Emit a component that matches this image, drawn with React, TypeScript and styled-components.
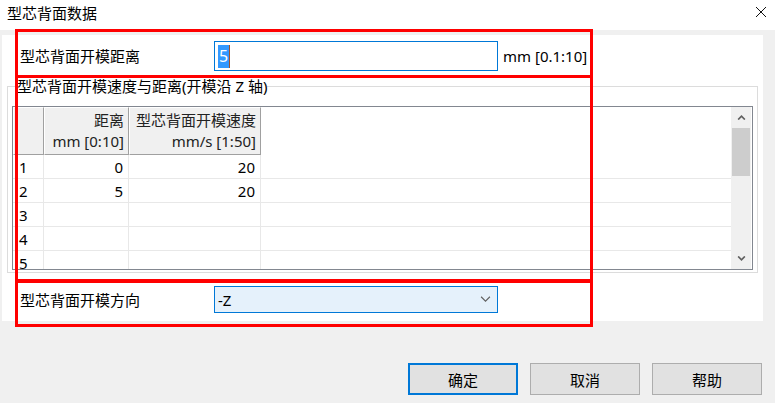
import { FC } from "react";
import styled, { createGlobalStyle } from "styled-components";

const GlobalStyle = createGlobalStyle`
  html, body {
    margin: 0;
    padding: 0;
    background: #f0f0f0;
  }
  body {
    font-family: "Noto Sans", "Noto Sans CJK SC", sans-serif;
    font-size: 15px;
    color: #000;
  }
`;

const rows = [
  { n: 1, dist: "0", speed: "20" },
  { n: 2, dist: "5", speed: "20" },
  { n: 3, dist: "", speed: "" },
  { n: 4, dist: "", speed: "" },
  { n: 5, dist: "", speed: "" },
];

const Chevron: FC<{ up?: boolean; color?: string; size?: number; weight?: number }> = ({
  up,
  color = "#606060",
  size = 9,
  weight = 2,
}) => (
  <svg width={size} height={Math.round(size * 0.6)} viewBox="0 0 10 6">
    <polyline
      points={up ? "1,5.5 5,1.5 9,5.5" : "1,0.5 5,4.5 9,0.5"}
      fill="none"
      stroke={color}
      strokeWidth={weight}
    />
  </svg>
);

const App: FC = () => {
  return (
    <Window>
      <GlobalStyle />
      <TitleBar>
        <Title>型芯背面数据</Title>
        <CloseIcon width="12" height="12" viewBox="0 0 12 12">
          <path d="M1 1 L11 11 M11 1 L1 11" stroke="#111" strokeWidth="1" />
        </CloseIcon>
      </TitleBar>

      <Panel>
        <FieldRow>
          <Label>型芯背面开模距离</Label>
          <TextBox>
            <Selected>5</Selected>
            <Caret />
          </TextBox>
          <Unit>mm [0.1:10]</Unit>
        </FieldRow>

        <Group>
          <Legend>型芯背面开模速度与距离(开模沿 Z 轴)</Legend>
          <TableFrame>
            <Grid>
              <HeaderRow>
                <HeaderCell />
                <HeaderCell>
                  <span>距离</span>
                  <span>mm [0:10]</span>
                </HeaderCell>
                <HeaderCell>
                  <span>型芯背面开模速度</span>
                  <span>mm/s [1:50]</span>
                </HeaderCell>
                <HeaderBlank />
              </HeaderRow>
              {rows.map((r) => (
                <DataRow key={r.n}>
                  <RowNum>{r.n}</RowNum>
                  <Cell>{r.dist}</Cell>
                  <Cell>{r.speed}</Cell>
                  <Blank />
                </DataRow>
              ))}
            </Grid>
            <ScrollBar>
              <ScrollButton>
                <Chevron up />
              </ScrollButton>
              <Thumb />
              <ScrollTrack />
              <ScrollButton>
                <Chevron />
              </ScrollButton>
            </ScrollBar>
          </TableFrame>
        </Group>

        <FieldRow $combo>
          <Label>型芯背面开模方向</Label>
          <ComboBox>
            <span>-Z</span>
            <Chevron color="#606060" size={11} weight={1} />
          </ComboBox>
        </FieldRow>
      </Panel>

      <ButtonBar>
        <DialogButton $default>确定</DialogButton>
        <DialogButton>取消</DialogButton>
        <DialogButton>帮助</DialogButton>
      </ButtonBar>

      <Marker $top={29} $height={49} />
      <Marker $top={75} $height={207} />
      <Marker $top={280} $height={47} />
    </Window>
  );
};

export default App;

const Window = styled.div`
  position: relative;
  width: 775px;
  height: 403px;
  background: #f0f0f0;
  overflow: hidden;
`;

const TitleBar = styled.div`
  height: 30px;
  background: #fff;
  display: flex;
  align-items: center;
  justify-content: space-between;
  padding: 0 8px 0 7px;
  box-sizing: border-box;
`;

const Title = styled.div`
  font-size: 15px;
  line-height: 20px;
  margin-top: -4px;
`;

const CloseIcon = styled.svg`
  margin-top: -6px;
`;

const Panel = styled.div`
  margin: 5px 12px 0 2px;
  height: 286px;
  background: #fff;
  box-sizing: border-box;
  padding: 6px 0 8px 0;
  display: flex;
  flex-direction: column;
`;

const FieldRow = styled.div<{ $combo?: boolean }>`
  display: flex;
  align-items: center;
  height: ${(p) => (p.$combo ? 27 : 30)}px;
  margin-top: ${(p) => (p.$combo ? 13 : 0)}px;
  padding-left: 18px;
`;

const Label = styled.div`
  width: 194px;
  font-size: 15px;
  line-height: 20px;
`;

const TextBox = styled.div`
  width: 284px;
  height: 30px;
  box-sizing: border-box;
  border: 1px solid #0078d7;
  display: flex;
  align-items: center;
  padding-left: 3px;
`;

const Selected = styled.span`
  background: #3399ff;
  color: #fff;
  font-size: 16px;
  line-height: 23px;
  padding: 0 1px;
`;

const Caret = styled.span`
  width: 1px;
  height: 23px;
  background: #a0522d;
`;

const Unit = styled.div`
  margin-left: 5px;
  font-size: 15px;
  line-height: 20px;
`;

const Group = styled.fieldset`
  margin: 5px 5px 0 5px;
  padding: 10px 4px 2px 4px;
  border: 1px solid #dcdcdc;
  height: 197px;
  box-sizing: border-box;
  min-width: 0;
`;

const Legend = styled.legend`
  padding: 0;
  margin-left: 5px;
  font-size: 15px;
  line-height: 20px;
  background: #fff;
`;

const TableFrame = styled.div`
  border: 1px solid #828790;
  height: 164px;
  box-sizing: border-box;
  display: flex;
  overflow: hidden;
`;

const Grid = styled.div`
  flex: 1;
  display: flex;
  flex-direction: column;
  overflow: hidden;
`;

const columns = "31px 85px 132px 1fr";

const HeaderRow = styled.div`
  display: grid;
  grid-template-columns: ${columns};
  height: 48px;
  flex-shrink: 0;
`;

const HeaderCell = styled.div`
  background: #f0f0f0;
  border-top: 1px solid #fff;
  border-left: 1px solid #fff;
  border-right: 1px solid #a0a0a0;
  border-bottom: 1px solid #a0a0a0;
  display: flex;
  flex-direction: column;
  justify-content: center;
  align-items: flex-end;
  padding-right: 4px;
  font-size: 15px;
  line-height: 21px;
  color: #222;
  white-space: nowrap;
`;

const HeaderBlank = styled.div`
  background: #fff;
`;

const DataRow = styled.div`
  display: grid;
  grid-template-columns: ${columns};
  height: 24px;
  flex-shrink: 0;
  border-bottom: 1px solid #e8e8e8;
  box-sizing: border-box;
`;

const RowNum = styled.div`
  border-right: 1px solid #e8e8e8;
  padding-left: 6px;
  font-size: 15px;
  line-height: 24px;
`;

const Cell = styled.div`
  border-right: 1px solid #e8e8e8;
  text-align: right;
  padding-right: 5px;
  font-size: 15px;
  line-height: 24px;
`;

const Blank = styled.div``;

const ScrollBar = styled.div`
  width: 20px;
  margin-right: 1px;
  background: #f0f0f0;
  display: flex;
  flex-direction: column;
`;

const ScrollButton = styled.div`
  height: 21px;
  display: flex;
  align-items: center;
  justify-content: center;
`;

const Thumb = styled.div`
  height: 48px;
  margin: 0 1px;
  background: #cdcdcd;
`;

const ScrollTrack = styled.div`
  flex: 1;
`;

const ComboBox = styled.div`
  width: 284px;
  height: 27px;
  box-sizing: border-box;
  border: 1px solid #0078d7;
  background: #e5f1fb;
  display: flex;
  align-items: center;
  justify-content: space-between;
  padding: 0 6px 0 3px;
  font-size: 15px;
  line-height: 20px;
`;

const ButtonBar = styled.div`
  display: flex;
  justify-content: flex-end;
  gap: 12px;
  margin: 42px 13px 0 0;
`;

const DialogButton = styled.button<{ $default?: boolean }>`
  width: 110px;
  height: 32px;
  box-sizing: border-box;
  background: #e1e1e1;
  border: ${(p) => (p.$default ? "2px solid #0078d7" : "1px solid #adadad")};
  font-family: "Noto Sans", "Noto Sans CJK SC", sans-serif;
  font-size: 15px;
  color: #000;
  padding: 0;
`;

const Marker = styled.div<{ $top: number; $height: number }>`
  position: absolute;
  left: 15px;
  top: ${(p) => p.$top}px;
  width: 578px;
  height: ${(p) => p.$height}px;
  box-sizing: border-box;
  border: 3px solid #ff0000;
  pointer-events: none;
`;
